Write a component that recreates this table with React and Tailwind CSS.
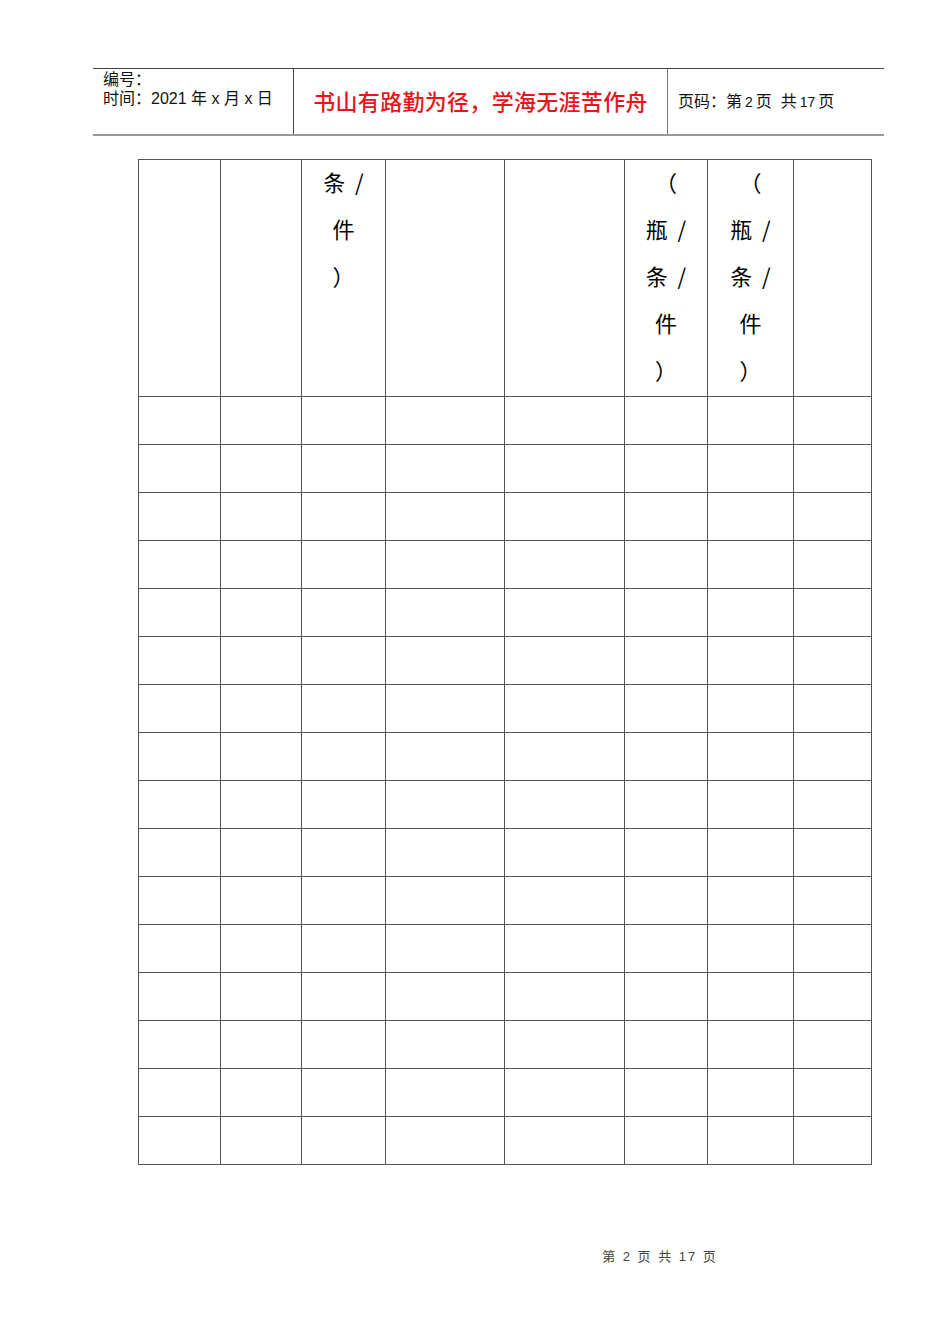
const cols = [82, 81, 84, 119, 120, 83, 86, 78]

const headCells = [
  [],
  [],
  ["条 /", "件", "）"],
  [],
  [],
  ["（", "瓶 /", "条 /", "件", "）"],
  ["（", "瓶 /", "条 /", "件", "）"],
  [],
]

const rows = Array.from({ length: 16 })

const App = () => {
  return (
    <div className="w-[950px] h-[1344px] bg-white relative" style={{ fontFamily: '"Liberation Sans", "Noto Sans CJK SC", sans-serif' }}>
      {/* page header */}
      <div className="absolute left-[93px] top-[68px] w-[791px] h-[68px] border-t border-t-[#444] border-b-2 border-b-[#999] flex text-[#111]">
        <div className="w-[201px] border-r border-[#444] pl-[10px] pt-[1px] text-[16px] leading-[19px]">
          <div>编号：</div>
          <div>时间：2021 年 x 月 x 日</div>
        </div>
        <div className="w-[374px] border-r border-[#777] flex items-center justify-center text-[22px] font-medium text-[#e8141b] tracking-[0.3px] pt-[2px]">
          书山有路勤为径，学海无涯苦作舟
        </div>
        <div className="flex-1 flex items-center pl-[10px] text-[16px] pt-[1px]">
          页码：第 <span className="text-[14px] mx-[3px]">2</span> 页&nbsp;&nbsp;共 <span className="text-[14px] mx-[3px]">17</span> 页
        </div>
      </div>

      {/* table */}
      <div className="absolute left-[138px] top-[159px] border-l border-t border-[#555]" style={{ fontFamily: '"Noto Sans CJK SC", sans-serif' }}>
        <div className="flex">
          {cols.map((w, i) => (
            <div key={i} className="h-[237px] border-r border-b border-[#555] flex flex-col items-center text-[22px] leading-[47px] -mt-0 pt-0 text-black" style={{ width: w }}>
              <div className="-mt-[2px] flex flex-col items-center">
                {headCells[i].map((t, j) => (
                  <div key={j} className="whitespace-pre">{t.replace(" ", "  ")}</div>
                ))}
              </div>
            </div>
          ))}
        </div>
        {rows.map((_, r) => (
          <div key={r} className="flex">
            {cols.map((w, i) => (
              <div key={i} className="h-[48px] border-r border-b border-[#555]" style={{ width: w }} />
            ))}
          </div>
        ))}
      </div>

      {/* footer */}
      <div className="absolute left-0 top-[1247px] w-full flex justify-center pl-[370px] text-[13px] text-[#444] tracking-[2px]">
        第 2 页 共 17 页
      </div>
    </div>
  )
}

export default App
